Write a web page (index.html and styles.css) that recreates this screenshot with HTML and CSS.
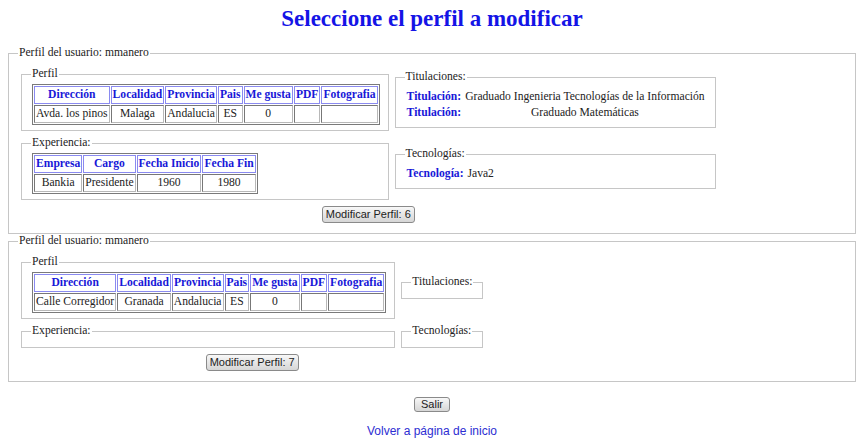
FILE: index.html
```html
<!DOCTYPE html>
<html lang="es">
<head>
<meta charset="utf-8">
<title>Seleccione el perfil a modificar</title>
<link rel="stylesheet" href="styles.css">
</head>
<body>
<h1 class="title">Seleccione el perfil a modificar</h1>

<fieldset class="user">
  <legend>Perfil del usuario: mmanero</legend>
  <div class="grid">
    <fieldset class="box">
      <legend>Perfil</legend>
      <table class="data">
        <tr><th>Dirección</th><th>Localidad</th><th>Provincia</th><th>Pais</th><th>Me gusta</th><th>PDF</th><th>Fotografia</th></tr>
        <tr><td>Avda. los pinos</td><td>Malaga</td><td>Andalucia</td><td>ES</td><td>0</td><td></td><td></td></tr>
      </table>
    </fieldset>
    <fieldset class="box side">
      <legend>Titulaciones:</legend>
      <table class="info">
        <tr><td class="lbl">Titulación:</td><td class="val">Graduado Ingenieria Tecnologías de la Información</td></tr>
        <tr><td class="lbl">Titulación:</td><td class="val">Graduado Matemáticas</td></tr>
      </table>
    </fieldset>
    <fieldset class="box">
      <legend>Experiencia:</legend>
      <table class="data">
        <tr><th>Empresa</th><th>Cargo</th><th>Fecha Inicio</th><th>Fecha Fin</th></tr>
        <tr><td>Bankia</td><td>Presidente</td><td>1960</td><td>1980</td></tr>
      </table>
    </fieldset>
    <fieldset class="box side">
      <legend>Tecnologías:</legend>
      <table class="info">
        <tr><td class="lbl">Tecnología:</td><td class="val">Java2</td></tr>
      </table>
    </fieldset>
    <div class="actions"><button class="btn" type="button">Modificar Perfil: 6</button></div>
  </div>
</fieldset>

<fieldset class="user">
  <legend>Perfil del usuario: mmanero</legend>
  <div class="grid">
    <fieldset class="box">
      <legend>Perfil</legend>
      <table class="data">
        <tr><th>Dirección</th><th>Localidad</th><th>Provincia</th><th>Pais</th><th>Me gusta</th><th>PDF</th><th>Fotografia</th></tr>
        <tr><td>Calle Corregidor</td><td>Granada</td><td>Andalucia</td><td>ES</td><td>0</td><td></td><td></td></tr>
      </table>
    </fieldset>
    <fieldset class="box side empty">
      <legend>Titulaciones:</legend>
    </fieldset>
    <fieldset class="box empty">
      <legend>Experiencia:</legend>
    </fieldset>
    <fieldset class="box side empty">
      <legend>Tecnologías:</legend>
    </fieldset>
    <div class="actions"><button class="btn" type="button">Modificar Perfil: 7</button></div>
  </div>
</fieldset>

<div class="footer">
  <button class="btn btn-small" type="button">Salir</button>
  <a class="home" href="#">Volver a página de inicio</a>
</div>
</body>
</html>
```

FILE: styles.css
```css
html, body {
  background: #ffffff;
}

body {
  margin: 0 8px;
  padding-top: 5px;
  font-family: "Liberation Serif", "Times New Roman", serif;
  font-size: 11.6px;
  line-height: 14px;
  color: #222222;
}

.title {
  margin: 0 0 13px;
  text-align: center;
  font-size: 23px;
  line-height: 28px;
  font-weight: bold;
  color: #1414e6;
}

fieldset {
  min-width: 0;
  margin: 0;
  border: 1px solid #c6c6c6;
}

legend {
  padding: 0 1px;
  line-height: 14px;
}

.user {
  padding: 7px 9px 10px 9px;
  margin-bottom: 0;
}

.grid {
  display: grid;
  grid-template-columns: auto auto;
  justify-content: start;
  align-items: center;
  column-gap: 6px;
  row-gap: 5px;
  margin-left: 3px;
}

.box {
  padding: 3px 8px 5px 9px;
}

.side {
  padding: 5px 9px 6px 9px;
}

.empty {
  min-height: 0;
  padding-top: 4px;
  padding-bottom: 5px;
}

.data {
  border-collapse: separate;
  border-spacing: 1px;
  border: 1px solid #7a7a7a;
  margin-left: 1px;
  font-size: 11.6px;
}

.data th {
  padding: 1px 1px;
  border: 1px solid #8a8af0;
  color: #1818d8;
  font-weight: bold;
  white-space: nowrap;
}

.data td {
  padding: 1px 1px;
  border: 1px solid;
  border-color: #777777 #b8b8b8 #b8b8b8 #777777;
  text-align: center;
  white-space: nowrap;
  height: 14px;
}

.info {
  border-collapse: collapse;
  margin-left: 1px;
}

.info td {
  padding: 1px 1px;
  white-space: nowrap;
}

.info .lbl {
  color: #1818d8;
  font-weight: bold;
  text-align: left;
  padding-right: 3px;
}

.info .val {
  text-align: center;
}

.actions {
  grid-column: 1 / -1;
  display: flex;
  justify-content: center;
  padding-top: 1px;
}

.btn {
  height: 17px;
  padding: 0 3px;
  border: 1px solid #8a8a8a;
  border-radius: 3px;
  background: linear-gradient(#f8f8f8, #e6e6e6 50%, #d6d6d6);
  font-family: "Liberation Sans", Arial, sans-serif;
  font-size: 11px;
  line-height: 15px;
  color: #222222;
}

.btn-small {
  height: 15px;
  line-height: 13px;
  padding: 0 6px;
}

.footer {
  display: flex;
  flex-direction: column;
  align-items: center;
  padding-top: 15px;
}

.home {
  margin-top: 12px;
  font-family: "Liberation Sans", Arial, sans-serif;
  font-size: 12px;
  line-height: 14px;
  color: #2d2dd2;
  text-decoration: none;
}
```
